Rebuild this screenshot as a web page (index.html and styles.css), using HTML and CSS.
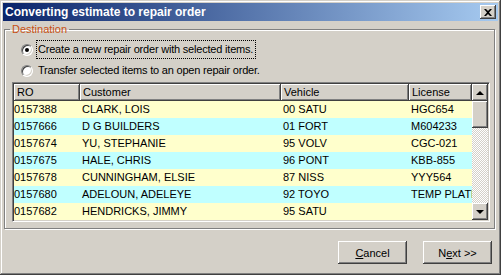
FILE: index.html
```html
<!DOCTYPE html>
<html lang="en">
<head>
	<meta charset="UTF-8">
	<title>Converting estimate to repair order</title>
	<link rel="stylesheet" href="styles.css">
</head>
<body>
	<div class="window">
		<div class="titlebar">
			<span class="title">Converting estimate to repair order</span>
			<span class="close-btn">
				<svg width="8" height="7" viewBox="0 0 8 7"><path d="M0 0h2l2 2 2-2h2L5 3.5 8 7H6L4 5 2 7H0l3-3.5z" fill="#000"/></svg>
			</span>
		</div>
		<div class="content">
			<fieldset class="group">
				<legend>Destination</legend>
				<div class="option">
					<span class="radio checked"></span>
					<span class="option-label focused">Create a new repair order with selected items.</span>
				</div>
				<div class="option">
					<span class="radio"></span>
					<span class="option-label">Transfer selected items to an open repair order.</span>
				</div>
				<div class="list">
					<div class="list-table">
						<div class="list-header">
							<span>RO</span>
							<span>Customer</span>
							<span>Vehicle</span>
							<span>License</span>
						</div>
						<div class="row yellow"><span>0157388</span><span>CLARK, LOIS</span><span>00 SATU</span><span>HGC654</span></div>
						<div class="row cyan"><span>0157666</span><span>D G BUILDERS</span><span>01 FORT</span><span>M604233</span></div>
						<div class="row yellow"><span>0157674</span><span>YU, STEPHANIE</span><span>95 VOLV</span><span>CGC-021</span></div>
						<div class="row cyan"><span>0157675</span><span>HALE, CHRIS</span><span>96 PONT</span><span>KBB-855</span></div>
						<div class="row yellow"><span>0157678</span><span>CUNNINGHAM, ELSIE</span><span>87 NISS</span><span>YYY564</span></div>
						<div class="row cyan"><span>0157680</span><span>ADELOUN, ADELEYE</span><span>92 TOYO</span><span>TEMP PLATE</span></div>
						<div class="row yellow"><span>0157682</span><span>HENDRICKS, JIMMY</span><span>95 SATU</span><span></span></div>
					</div>
					<div class="scrollbar">
						<span class="sb-btn"><span class="arrow up"></span></span>
						<span class="sb-thumb"></span>
						<span class="sb-track"></span>
						<span class="sb-btn"><span class="arrow down"></span></span>
					</div>
				</div>
			</fieldset>
			<div class="buttons">
				<button class="btn"><u>C</u>ancel</button>
				<button class="btn">N<u>e</u>xt &gt;&gt;</button>
			</div>
		</div>
	</div>
</body>
</html>
```

FILE: styles.css
```css
/* Classic dialog */
body {
	margin: 0;
	font-family: 'Liberation Sans', Arial, sans-serif;
	font-size: 11px;
	color: #000;
	background: #d4d0c8;
}
.window {
	width: 501px;
	height: 275px;
	box-sizing: border-box;
	padding: 3px;
	background: #d4d0c8;
	box-shadow: inset -1px -1px #404040, inset 1px 1px #d4d0c8, inset -2px -2px #808080, inset 2px 2px #fff;
}
.titlebar {
	height: 18px;
	display: flex;
	align-items: center;
	justify-content: space-between;
	padding: 0 2px 0 2px;
	background: linear-gradient(to right, #0a246a, #a6caf0);
}
.title {
	color: #fff;
	font-weight: bold;
	font-size: 12px;
	line-height: 18px;
}
.close-btn {
	width: 16px;
	height: 14px;
	box-sizing: border-box;
	display: flex;
	align-items: center;
	justify-content: center;
	background: #d4d0c8;
	box-shadow: inset -1px -1px #404040, inset 1px 1px #fff, inset -2px -2px #808080;
}
.content {
	padding: 2px 0 0 1px;
}

/* Group box */
.group {
	margin: 0;
	width: 491px;
	box-sizing: border-box;
	padding: 3px 4px 6px 7px;
	border: 1px solid #808080;
	box-shadow: inset 1px 1px #fff, 1px 1px #fff;
}
.group legend {
	color: #c85014;
	padding: 0 2px;
	margin-left: -2px;
	line-height: 13px;
}
.option {
	height: 21px;
	display: flex;
	align-items: center;
}
.radio {
	position: relative;
	width: 12px;
	height: 12px;
	box-sizing: border-box;
	margin-left: 9px;
	border-radius: 50%;
	background: #fff;
	border: 1px solid;
	border-color: #808080 #fff #fff #808080;
	box-shadow: inset 1px 1px #404040, inset -1px -1px #d4d0c8;
}
.radio.checked::after {
	content: "";
	position: absolute;
	left: 3px;
	top: 3px;
	width: 4px;
	height: 4px;
	border-radius: 50%;
	background: #000;
}
.option-label {
	margin-left: 3px;
	padding: 1px 2px 2px 1px;
	line-height: 14px;
	letter-spacing: -0.2px;
	border: 1px dotted transparent;
}
.option-label.focused {
	border-color: #000;
}

/* List view */
.list {
	width: 478px;
	height: 140px;
	box-sizing: border-box;
	margin-top: 1px;
	display: flex;
	border: 1px solid;
	border-color: #808080 #fff #fff #808080;
	box-shadow: inset 1px 1px #404040, inset -1px -1px #d4d0c8;
	padding: 1px;
	background: #fff;
	overflow: hidden;
}
.list-table {
	width: 458px;
}
.list-header,
.row {
	display: grid;
	grid-template-columns: 66px 201px 128px 63px;
}
.list-header span {
	height: 17px;
	box-sizing: border-box;
	padding-left: 3px;
	line-height: 16px;
	background: #d4d0c8;
	box-shadow: inset -1px -1px #404040, inset 1px 1px #fff, inset -2px -2px #808080;
}
.row span {
	height: 17px;
	line-height: 17px;
	padding-left: 2px;
	white-space: nowrap;
	overflow: hidden;
}
.row span:first-child {
	padding-left: 0;
}
.yellow {
	background: #ffffcc;
}
.cyan {
	background: #c0ffff;
}
.scrollbar {
	width: 16px;
	display: flex;
	flex-direction: column;
}
.sb-btn,
.sb-thumb {
	display: flex;
	align-items: center;
	justify-content: center;
	background: #d4d0c8;
	box-shadow: inset -1px -1px #404040, inset 1px 1px #fff, inset -2px -2px #808080;
}
.sb-btn {
	height: 17px;
}
.sb-thumb {
	height: 27px;
}
.sb-track {
	flex: 1;
	background: repeating-conic-gradient(#d4d0c8 0 25%, #fff 0 50%) 0 0 / 2px 2px;
}
.arrow {
	width: 0;
	height: 0;
	border-left: 4px solid transparent;
	border-right: 4px solid transparent;
}
.arrow.up {
	border-bottom: 4px solid #000;
}
.arrow.down {
	border-top: 4px solid #000;
}

/* Dialog buttons */
.buttons {
	display: flex;
	justify-content: flex-end;
	gap: 16px;
	margin-top: 12px;
	padding-right: 6px;
}
.btn {
	width: 69px;
	height: 23px;
	padding: 0;
	font-family: inherit;
	font-size: 11px;
	color: #000;
	border: none;
	background: #d4d0c8;
	box-shadow: inset -1px -1px #404040, inset 1px 1px #fff, inset -2px -2px #808080;
}
```
